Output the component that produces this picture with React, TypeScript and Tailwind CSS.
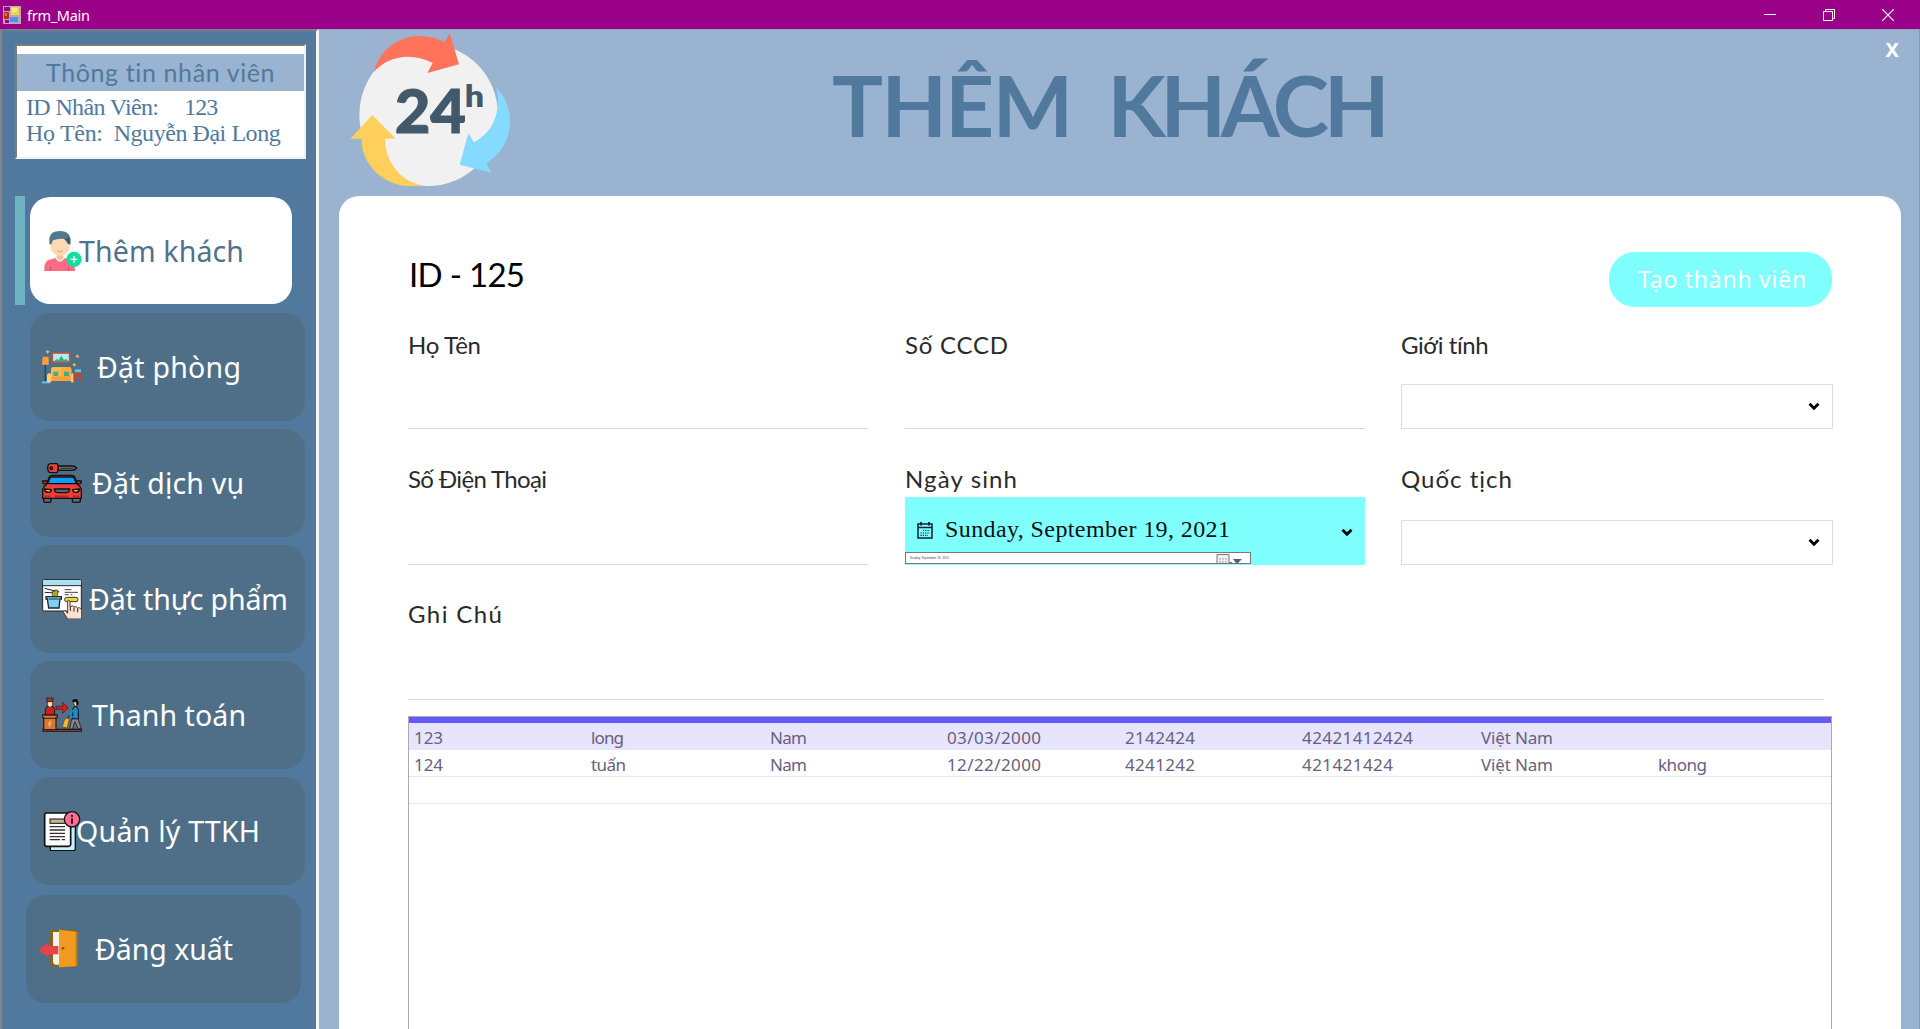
import { useLayoutEffect, useRef, useState } from 'react';
import type { ReactNode } from 'react';

/* Tracks a line of text so that it spans the given width. */
function Fit({ w, children, className = '' }: { w: number; children: string; className?: string }) {
  const ref = useRef<HTMLSpanElement>(null);
  const [spacing, setSpacing] = useState(0);
  useLayoutEffect(() => {
    const el = ref.current;
    if (!el) return;
    el.style.letterSpacing = '0px';
    const natural = el.getBoundingClientRect().width;
    const next = (w - natural) / Math.max(1, children.length - 1);
    el.style.letterSpacing = `${next}px`;
    setSpacing(next);
  }, [w, children]);
  return (
    <span ref={ref} className={`inline-block whitespace-pre ${className}`} style={{ letterSpacing: `${spacing}px` }}>
      {children}
    </span>
  );
}

function AppIcon() {
  return (
    <svg className="h-[18px] w-[18px]" viewBox="0 0 18 18">
      <rect width="18" height="18" fill="#b9a9b4" />
      <rect x="1" y="1" width="6" height="4" fill="#8d0c80" />
      <rect x="1" y="6" width="5" height="7" fill="#c0281c" />
      <rect x="8" y="1" width="8" height="8" fill="#f9cf45" />
      <rect x="9" y="2" width="5" height="4" fill="#fde58a" />
      <rect x="7" y="11" width="8" height="5" fill="#4f8fe8" />
      <rect x="2" y="14" width="4" height="3" fill="#8d0c80" />
      <rect x="2" y="7" width="2" height="3" fill="#ea6b58" />
    </svg>
  );
}

function Logo() {
  return (
    <svg className="ml-7 mt-px h-[158px] w-[165px] shrink-0" viewBox="51 90 495 474">
      <ellipse cx="296" cy="342" rx="208" ry="213" fill="#f1f1f1" />
      <path d="M132 212 C150 145 205 105 270 105 Q310 105 344 124 L359 96 L387 190 L292 216 L308 186 Q270 167 235 167 C190 168 160 183 132 212Z" fill="#ff735a" />
      <path d="M499 260 C525 285 540 318 540 362 C540 415 512 460 469 486 L484 515 L389 491 L415 397 L432 424 C485 395 503 350 504 300 Q503 280 499 260Z" fill="#84daff" />
      <path d="M127 342 L197 413 L165 413 C165 480 210 540 276 553 C180 570 96 505 94 413 L61 413Z" fill="#ffcf5c" />
      <text x="194" y="397" textLength="214" lengthAdjust="spacingAndGlyphs" fill="#42596b" stroke="#42596b" strokeWidth="3" fontFamily="Lato" fontWeight="900" fontSize="181">24</text>
      <text x="404" y="317" textLength="58" lengthAdjust="spacingAndGlyphs" fill="#42596b" fontFamily="Lato" fontWeight="800" fontSize="88">h</text>
    </svg>
  );
}

function GuestIcon() {
  return (
    <svg className="h-10 w-10" viewBox="0 0 120 120">
      <path d="M4 120 V106 Q6 87 28 84 L38 80 H62 L76 84 Q96 88 96 120Z" fill="#ff6b83" />
      <path d="M36 80 Q50 104 66 80 L62 74 H40Z" fill="#e4e7ef" />
      <path d="M42 66 H60 V82 Q51 91 42 82Z" fill="#fbc08e" />
      <path d="M22 22 H80 V48 Q78 72 51 74 Q24 72 22 48Z" fill="#ffd8b4" />
      <path d="M19 40 V22 Q22 0 51 0 Q80 1 82 22 V40 H78 L75 26 Q50 20 30 28 L25 40Z" fill="#53788a" />
      <path d="M64 24 Q82 16 82 24 V40 H76Z" fill="#3f5c6c" />
      <path d="M43 60 Q51 66 59 60" stroke="#eaa06e" strokeWidth="3" fill="none" />
      <path d="M23 108 V120 M77 108 V120" stroke="#dd4668" strokeWidth="3" />
      <circle cx="93" cy="85" r="23" fill="#0fe0a0" />
      <path d="M93 75 V95 M83 85 H103" stroke="#fff" strokeWidth="4" />
    </svg>
  );
}

function RoomIcon() {
  return (
    <svg className="h-10 w-10" viewBox="0 0 120 120">
      <path d="M10 40 V106" stroke="#134a69" strokeWidth="4" />
      <path d="M2 29 H20 V53 H0Z" fill="#ff9c3f" />
      <path d="M0 106 H24" stroke="#67c5e9" strokeWidth="6" />
      <rect x="31" y="18" width="52" height="27" fill="#b7e9f5" stroke="#b4593e" strokeWidth="5" />
      <path d="M36 43 L45 36 L50 39 L58 26 L66 39 L72 36 L80 43Z" fill="#37ae7c" />
      <path d="M27 67 Q27 60 34 60 H82 Q88 60 88 67 V100 H27Z" fill="#ffb84e" />
      <path d="M58 60 H84 Q88 61 88 67 V90 H58Z" fill="#ffaa3d" />
      <rect x="34" y="74" width="15" height="13" fill="#38b17e" />
      <rect x="66" y="74" width="15" height="13" fill="#38b17e" />
      <path d="M27 88 H88 V102 H27Z" fill="#ff9c3f" />
      <path d="M15 84 Q22 72 28 84 V106 H15Z M87 84 Q93 72 99 84 V106 H87Z" fill="#ffcd78" />
      <rect x="99" y="67" width="18" height="9" fill="#65c2e8" />
      <path d="M94 77 H120 V106 H113 V94 H99 V106 H94Z" fill="#a9503b" />
      <path d="M17 9 l3 4 5 1 -5 2 -3 5 -3 -5 -5 -2 5 -1Z M106 22 l3 4 5 1 -5 2 -3 5 -3 -5 -5 -2 5 -1Z M97 48 l3 4 5 1 -5 2 -3 5 -3 -5 -5 -2 5 -1Z" fill="#f5bd51" />
    </svg>
  );
}

function CarIcon() {
  return (
    <svg className="h-10 w-10" viewBox="0 0 120 120">
      <g stroke="#111" strokeWidth="4" strokeLinejoin="round">
        <path d="M49 9 H90 Q99 9 104 15 Q99 22 90 22 H49Z" fill="#666b70" />
        <path d="M25 2 H43 Q48 2 48 8 V22 Q48 29 43 29 H25 Q17 28 17 16 Q17 3 25 2Z" fill="#f23d3a" />
        <circle cx="28" cy="16" r="4" fill="#4f6f84" />
        <path d="M5 106 H27 V114 Q27 118 21 118 H11 Q5 118 5 113Z M91 106 H115 V113 Q115 118 109 118 H97 Q91 118 91 114Z" fill="#596a75" />
        <path d="M2 54 H16 V62 H4Z M104 54 H118 L116 62 H104Z" fill="#f23d3a" />
        <path d="M2 106 V78 Q3 72 13 65 L22 42 Q24 37 31 37 H89 Q96 37 98 42 L107 65 Q117 72 118 78 V106Z" fill="#f23d3a" />
        <path d="M25 42 H95 L103 62 H17Z" fill="#109df5" />
        <path d="M37 78 H83 Q82 88 74 89 H46 Q38 88 37 78Z" fill="#526a7a" />
        <path d="M7 78 L28 80 Q27 88 20 88 Q9 88 7 78Z M113 78 L92 80 Q93 88 100 88 Q111 88 113 78Z" fill="#e6cf19" />
      </g>
      <path d="M8 101 H26 M39 101 H81 M93 101 H112" stroke="#a51d25" strokeWidth="7" strokeDasharray="6 2" />
      <path d="M55 16 H94" stroke="#33383c" strokeWidth="3" />
    </svg>
  );
}

function FoodIcon() {
  return (
    <svg className="h-10 w-10" viewBox="0 0 120 120">
      <rect x="2" y="2" width="116" height="94" rx="5" fill="#fff" stroke="#222" strokeWidth="3" />
      <path d="M3 4 H117 V18 H3Z" fill="#a8e0f4" />
      <path d="M2 20 H118" stroke="#222" strokeWidth="3" />
      <path d="M8 28 L52 39 M8 40 L42 42" stroke="#222" strokeWidth="3" />
      <path d="M31 53 V37 H39 V33 H47 V53" fill="#b7a21b" stroke="#333" strokeWidth="2" />
      <path d="M12 53 H58 V60 H54 L51 87 H20 L16 60 H12Z" fill="#82cff2" stroke="#1c2830" strokeWidth="4" />
      <path d="M20 60 H50" stroke="#1c2830" strokeWidth="3" />
      <path d="M68 32 H88 M68 40 H108 M68 47 H80 M86 47 H91" stroke="#444" strokeWidth="3" />
      <rect x="68" y="55" width="40" height="13" rx="6" fill="#f4d43b" stroke="#333" strokeWidth="3" />
      <path d="M77 120 L65 101 Q64 92 71 96 L77 103 V66 Q78 61 84 66 V83 Q92 77 96 84 Q103 80 107 87 Q117 84 119 94 V120Z" fill="#fde3cf" stroke="#4b3b36" strokeWidth="3" />
      <path d="M85 83 V96 M96 86 V98 M107 88 V100" stroke="#2c2421" strokeWidth="3" />
    </svg>
  );
}

function CheckoutIcon() {
  return (
    <svg className="h-10 w-10" viewBox="0 0 120 120">
      <path d="M0 106 H120" stroke="#111" strokeWidth="9" />
      <path d="M0 106 H118" stroke="#8e3427" strokeWidth="4" />
      <path d="M10 60 V44 Q12 34 23 31 Q36 34 38 44 V60Z" fill="#c4251f" stroke="#211" strokeWidth="3" />
      <path d="M16 18 H32 V31 L24 38 L16 31Z" fill="#ffd9b3" stroke="#211" strokeWidth="2" />
      <path d="M13 9 H34 L32 20 H15Z" fill="#9b3b22" stroke="#211" strokeWidth="2" />
      <path d="M1 60 H46 V68 H42 V104 H5 V68 H1Z" fill="#d27740" stroke="#3a1c10" strokeWidth="4" />
      <path d="M5 70 H42" stroke="#3a1c10" strokeWidth="3" />
      <path d="M26 76 L18 85 L22 98 L28 86Z" fill="#f5b43c" />
      <path d="M42 34 H62 V22 L79 38 L62 55 V43 H42Z" fill="#d81c24" stroke="#511" strokeWidth="2" />
      <path d="M94 18 Q106 12 108 22 L105 34 H98Z" fill="#ffd9b3" stroke="#111" strokeWidth="2" />
      <path d="M90 20 Q92 9 106 13 L110 27 L104 34 L102 22Z" fill="#111" />
      <path d="M92 72 V43 Q94 34 102 34 L109 43 V72Z" fill="#2189c8" stroke="#111" strokeWidth="3" />
      <path d="M92 45 L83 62 L92 67" fill="none" stroke="#2189c8" strokeWidth="7" />
      <path d="M89 72 H108 L118 101 H108 L99 80 L91 102 H83Z" fill="#878487" stroke="#111" strokeWidth="2" />
      <path d="M82 61 L77 70" stroke="#2b2011" strokeWidth="3" />
      <path d="M67 75 Q75 65 82 73 L75 99 L61 95Z" fill="#f9b62f" stroke="#634616" strokeWidth="2" />
    </svg>
  );
}

function RecordsIcon() {
  return (
    <svg className="h-10 w-10" viewBox="0 0 120 120">
      <path d="M25 106 V118 Q26 119 31 119 H95 Q100 118 100 112 V30 H88" fill="#c8f0f8" stroke="#111" strokeWidth="4" />
      <path d="M13 6 H83 Q86 6 86 12 V101 Q85 106 79 106 H13 Q8 105 8 100 V12 Q8 6 13 6Z" fill="#fff" stroke="#111" strokeWidth="5" />
      <rect x="24" y="24" width="49" height="13" fill="#c4b28b" stroke="#111" strokeWidth="3" />
      <path d="M23 47 H69 M23 57 H69 M23 67 H69 M23 77 H69 M23 86 H54 M59 86 H69" stroke="#333" strokeWidth="4" />
      <circle cx="90" cy="25" r="23" fill="#ff6f94" stroke="#111" strokeWidth="4" />
      <circle cx="90" cy="15" r="3.5" fill="#3c1220" />
      <path d="M90 22 V38" stroke="#3c1220" strokeWidth="6" />
    </svg>
  );
}

function ExitIcon() {
  return (
    <svg className="h-10 w-10" viewBox="0 0 120 120">
      <path d="M37 10 Q37 3 45 3 H112 Q119 4 119 10 V108 Q119 113 112 114 H45 Q38 113 37 107Z" fill="#94610d" />
      <path d="M45 9 H68 V107 H53 Q45 105 45 98Z" fill="#f3f1ee" />
      <path d="M63 2 L114 8 Q118 9 118 13 V107 Q118 112 113 112 L63 115Z" fill="#f19c20" />
      <path d="M115 10 V110" stroke="#c17a12" strokeWidth="4" />
      <circle cx="75" cy="58" r="4" fill="#855611" />
      <path d="M1 63 L32 39 V51 H61 V76 H32 V85Z" fill="#e74349" />
    </svg>
  );
}

function Chevron() {
  return (
    <svg className="h-[9px] w-3 shrink-0" viewBox="0 0 12 9">
      <path d="M1.5 1.7 L6 6.2 L10.5 1.7" fill="none" stroke="#000" strokeWidth="2.8" />
    </svg>
  );
}

function NavButton({ icon, label, w, gap, className = '' }: { icon: ReactNode; label: string; w: number; gap: string; className?: string }) {
  return (
    <button className={`flex h-[108px] w-[275px] shrink-0 items-center rounded-[20px] bg-[#4e6f87] pl-3 text-white ${className}`}>
      <span className="shrink-0">{icon}</span>
      <Fit w={w} className={`text-left text-[28.5px] leading-10 ${gap}`}>{label}</Fit>
    </button>
  );
}

const gothic = "font-['Lato','Inter',sans-serif]";

function Label({ w, children }: { w: number; children: string }) {
  return (
    <div className={`h-[30px] ${gothic} text-[24px] leading-[29px] text-[#2a2a2a]`}>
      <Fit w={w}>{children}</Fit>
    </div>
  );
}

function SelectBox({ className }: { className: string }) {
  return (
    <div className={`flex h-[45px] items-center justify-end border border-[#d9dee4] pr-3 ${className}`}>
      <Chevron />
    </div>
  );
}

const rows: [string, number][][] = [
  [['123', 29], ['long', 33], ['Nam', 37], ['03/03/2000', 94], ['2142424', 70], ['42421412424', 111], ['Việt Nam', 72], ['', 0]],
  [['124', 29], ['tuấn', 35], ['Nam', 37], ['12/22/2000', 94], ['4241242', 70], ['421421424', 91], ['Việt Nam', 72], ['khong', 49]],
];

export default function App() {
  return (
    <div className="flex h-[1029px] w-[1920px] flex-col overflow-hidden bg-[#99b3d1] font-['Noto_Sans',sans-serif]">
      <header className="flex h-[29px] shrink-0 items-center bg-[#9b0089] pl-[3px] text-white">
        <AppIcon />
        <Fit w={63} className="ml-1.5 text-[14.5px] leading-5">frm_Main</Fit>
        <div className="ml-auto flex items-center gap-[47px] pr-[26px]">
          <svg className="h-3 w-3" viewBox="0 0 12 12"><path d="M0 5.5 H12" stroke="#fff" /></svg>
          <svg className="h-3 w-3" viewBox="0 0 12 12"><path d="M.5 2.5 H9.5 V11.5 H.5Z M2.5 2.5 V.5 H11.5 V9.5 H9.5" fill="none" stroke="#fff" /></svg>
          <svg className="h-3 w-3" viewBox="0 0 12 12"><path d="M0 0 L12 12 M12 0 L0 12" stroke="#fff" strokeWidth="1.2" /></svg>
        </div>
      </header>

      <div className="flex min-h-0 flex-1">
        <aside className="flex w-[319px] shrink-0 flex-col border-l-2 border-r-[3px] border-t-2 border-l-[#858585] border-r-[#f3f5f7] border-t-[#75808a] bg-[#51799d]">
          <section className="ml-[13px] mt-[13px] h-[115px] w-[291px] border-2 border-b-[#f0f0f0] border-l-[#7b7b7b] border-r-[#f0f0f0] border-t-[#7b7b7b] bg-white pt-2">
            <div className={`h-[37px] bg-[#99b3d1] pl-[29px] ${gothic} text-[25px] leading-[36px] text-[#51799d]`}>
              <Fit w={229}>Thông tin nhân viên</Fit>
            </div>
            <div className="flex flex-col pl-[9px] pt-[3px] font-['Liberation_Serif',serif] text-[24px] leading-[26px] text-[#51799d]">
              <div className="flex gap-[26px]"><Fit w={133}>ID Nhân Viên:</Fit><Fit w={34}>123</Fit></div>
              <div className="flex gap-[11px]"><Fit w={77}>Họ Tên:</Fit><Fit w={167}>Nguyễn Đại Long</Fit></div>
            </div>
          </section>

          <nav className="mt-[37px] flex flex-col gap-2 pl-[13px]">
            <div className="flex h-[109px] gap-[5px]">
              <div className="w-2.5 bg-[#6fb3c3]" />
              <button className="mt-px flex h-[107px] w-[262px] items-center rounded-[20px] bg-white pl-[13px] text-[#50718a]">
                <span className="shrink-0"><GuestIcon /></span>
                <Fit w={165} className="-ml-[4px] text-left text-[28.5px] leading-10">Thêm khách</Fit>
              </button>
            </div>
            <div className="flex flex-col gap-2 pl-[15px]">
              <NavButton icon={<RoomIcon />} label="Đặt phòng" w={144} gap="ml-[15px]" />
              <NavButton icon={<CarIcon />} label="Đặt dịch vụ" w={152} gap="ml-2.5" />
              <NavButton icon={<FoodIcon />} label="Đặt thực phẩm" w={199} gap="ml-[7px]" />
              <NavButton icon={<CheckoutIcon />} label="Thanh toán" w={154} gap="ml-2.5" />
              <NavButton icon={<RecordsIcon />} label="Quản lý TTKH" w={184} gap="-ml-[6px]" />
              <NavButton icon={<ExitIcon />} label="Đăng xuất" w={138} gap="ml-[17px]" className="-ml-1 mt-0.5" />
            </div>
          </nav>
        </aside>

        <main className="flex min-w-0 flex-1 flex-col border-r border-t border-r-[#819cbb] border-t-[#8fa5c0]">
          <div className="flex h-[166px] shrink-0 items-start">
            <Logo />
            <h1 className="ml-[320px] mt-[15px] flex gap-[36px] font-['Lato',sans-serif] text-[85px] font-bold leading-[118px] text-[#51799d]">
              <Fit w={241}>THÊM</Fit>
              <Fit w={282}>KHÁCH</Fit>
            </h1>
            <button className="ml-auto mr-5 mt-[6px] font-['Noto_Sans',sans-serif] text-[20px] font-bold leading-7 text-white">X</button>
          </div>

          <div className="ml-5 mr-[18px] flex min-h-0 flex-1 flex-col rounded-t-[20px] bg-white pl-[69px] pt-[56px]">
            <div className="flex w-[1424px] justify-between">
              <div className={`pl-px ${gothic} text-[33px] leading-[42px] text-black`}><Fit w={116} className="mt-px">ID - 125</Fit></div>
              <button className="flex h-[55px] w-[223px] items-center justify-center rounded-[26px] bg-[#80ffff] pb-0.5 pl-1 text-[23px] leading-8 text-white">
                <Fit w={168}>Tạo thành viên</Fit>
              </button>
            </div>

            <div className="mt-[23px] grid grid-cols-[460px_460px_431px] gap-x-[37px] gap-y-[35px]">
              <div><Label w={73}>Họ Tên</Label><div className="h-[69px] border-b border-[#d3d9df]" /></div>
              <div><Label w={103}>Số CCCD</Label><div className="h-[69px] border-b border-[#d3d9df]" /></div>
              <div className="-ml-px"><Label w={88}>Giới tính</Label><SelectBox className="mt-6" /></div>
              <div><Label w={139}>Số Điện Thoại</Label><div className="h-[71px] border-b border-[#d3d9df]" /></div>
              <div>
                <Label w={112}>Ngày sinh</Label>
                <div className="mt-[3px] flex h-[68px] flex-col bg-[#80ffff]">
                  <div className="flex h-[55px] items-center pl-3 pr-3 pt-3">
                    <svg className="h-[17px] w-4" viewBox="0 0 16 17">
                      <path d="M1 2 H15 V16 H1Z M1 5.5 H15" fill="none" stroke="#123" strokeWidth="1.5" />
                      <path d="M4 0 V3.5 M12 0 V3.5" stroke="#123" strokeWidth="1.8" />
                      <path d="M6 8.5 H13 M3.5 11 H13 M3.5 13.3 H11" stroke="#123" strokeWidth="1.2" strokeDasharray="1.2 1.1" />
                    </svg>
                    <Fit w={285} className="ml-3 -mt-1 font-['Liberation_Serif',serif] text-[24px] leading-8 text-[#111]">Sunday, September 19, 2021</Fit>
                    <span className="ml-auto mt-1 flex"><Chevron /></span>
                  </div>
                  <div className="flex h-[12px] w-[346px] items-center overflow-hidden border border-[#777] bg-white pl-1">
                    <span className="whitespace-pre font-['Liberation_Sans',sans-serif] text-[3px] leading-none text-[#444]">Sunday, September 19, 2021</span>
                    <svg className="ml-auto mr-1.5 h-[10px] w-7" viewBox="0 0 28 10">
                      <path d="M1 12 V1.5 H13 V9.5 H16" fill="#eee" stroke="#777" />
                      <path d="M3 6 H12 M3 9 H12" stroke="#aaa" strokeDasharray="2 1" />
                      <path d="M17 6 H26 L22 10 H20Z" fill="#4a6090" />
                    </svg>
                  </div>
                </div>
              </div>
              <div className="-ml-px"><Label w={111}>Quốc tịch</Label><SelectBox className="mt-[26px]" /></div>
            </div>
            <div className="mt-[34px] w-[1416px]"><Label w={94}>Ghi Chú</Label><div className="h-[71px] border-b border-[#d3d9df]" /></div>

            <div className="mt-4 min-h-0 w-[1424px] flex-1 border-x border-t border-[#aaaab4] text-[17px] text-[#68607e]">
              <div className="h-1.5 bg-[#6459f9]" />
              {rows.map((row, i) => (
                <div
                  key={i}
                  className={`grid h-[27px] grid-cols-[177px_179px_177px_178px_177px_179px_177px_178px] border-b border-[#e7e4fe] pl-[5px] leading-[29px] ${i === 0 ? 'bg-[#e7e4fe]' : ''}`}
                >
                  {row.map(([text, w], j) => (
                    <div key={j}>{text && <Fit w={w}>{text}</Fit>}</div>
                  ))}
                </div>
              ))}
              <div className="h-[27px] border-b border-[#e7e4fe]" />
            </div>
          </div>
        </main>
      </div>
    </div>
  );
}
